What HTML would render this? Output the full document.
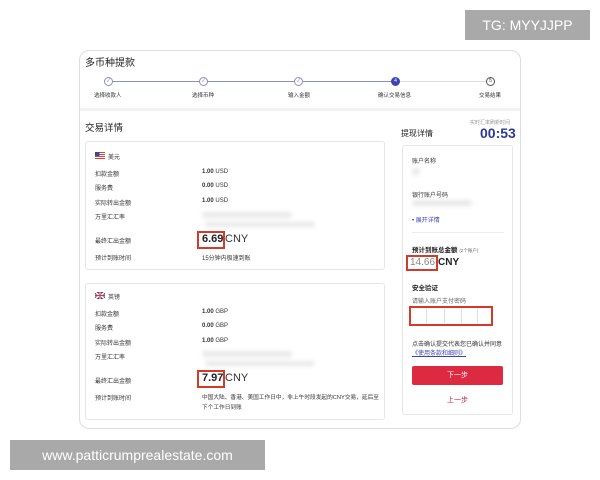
<!DOCTYPE html>
<html><head><meta charset="utf-8"><style>
*{margin:0;padding:0;box-sizing:border-box}
body{width:600px;height:480px;background:#fff;position:relative;overflow:hidden;font-family:"Liberation Sans","Noto Sans CJK SC",sans-serif;color:#222}
.a{position:absolute;white-space:nowrap}
.s{font-size:6px;color:#333}
.card{position:absolute;border:1px solid #e6e6e6;border-radius:3px;background:#fff}
.red{position:absolute;border:2px solid #d23a2a}
.blur{position:absolute;background:#e8e8e8;filter:blur(2px);border-radius:3px}
.c{position:absolute;width:9px;height:9px;border-radius:50%;border:1px solid #8a8fc0;background:#fff;font-size:5px;text-align:center;line-height:7px;color:#6a70b0}
</style></head><body>
<div class="a" style="left:465px;top:10px;width:125px;height:30px;background:#a9a9a9;color:#fff;font-size:14px;line-height:30px;text-align:center">TG: MYYJJPP</div>
<div class="a" style="left:10px;top:440px;width:255px;height:30px;background:#a9a9a9;color:#fff;font-size:14px;line-height:30px;text-align:center">www.patticrumprealestate.com</div>

<div class="a" style="left:79px;top:50px;width:442px;height:379px;border:1px solid #ddd;border-radius:10px;background:#fff"></div>
<div class="a" style="left:80px;top:108px;width:440px;height:3px;background:#f2f2f2"></div>
<div class="a" style="left:85px;top:54px;font-size:10px;color:#222">多币种提款</div>
<div class="a" style="left:108px;top:81px;width:287px;height:1px;background:#8a8fc0"></div>
<div class="a" style="left:395px;top:81px;width:95px;height:1px;background:#ddd"></div>
<div class="c" style="left:104px;top:77px">✓</div>
<div class="c" style="left:199px;top:77px">✓</div>
<div class="c" style="left:294px;top:77px">✓</div>
<div class="c" style="left:391px;top:77px;background:#3b44b0;border-color:#3b44b0;color:#fff">4</div>
<div class="c" style="left:486px;top:77px;border-color:#555;color:#333">5</div>
<div class="a s" style="left:94px;top:91px;font-size:5.5px">选择收款人</div>
<div class="a s" style="left:192px;top:91px;font-size:5.5px">选择币种</div>
<div class="a s" style="left:288px;top:91px;font-size:5.5px">输入金额</div>
<div class="a s" style="left:378px;top:91px;font-size:5.5px">确认交易信息</div>
<div class="a s" style="left:479px;top:91px;font-size:5.5px">交易结果</div>

<div class="a" style="left:85px;top:120px;font-size:9.5px">交易详情</div>
<div class="a" style="left:401px;top:128px;font-size:8px">提现详情</div>
<div class="a" style="left:470px;top:119px;font-size:5px;color:#999">实时汇率刷新时间</div>
<div class="a" style="left:480px;top:125px;font-size:14px;color:#2c3a8f;font-weight:bold">00:53</div>

<div class="card" style="left:85px;top:141px;width:300px;height:129px"></div>
<svg class="a" style="left:95px;top:152px" width="10" height="7"><rect width="10" height="7" fill="#fff"/><rect y="0" width="10" height="1" fill="#c44"/><rect y="2" width="10" height="1" fill="#c44"/><rect y="4" width="10" height="1" fill="#c44"/><rect y="6" width="10" height="1" fill="#c44"/><rect width="4.5" height="4" fill="#3a4a8a"/></svg>
<div class="a s" style="left:108px;top:152px">美元</div>
<div class="a s" style="left:95px;top:169px">扣款金额</div><div class="a s" style="left:202px;top:169px"><b>1.00</b> USD</div>
<div class="a s" style="left:95px;top:183px">服务费</div><div class="a s" style="left:202px;top:183px"><b>0.00</b> USD</div>
<div class="a s" style="left:95px;top:198px">实际转出金额</div><div class="a s" style="left:202px;top:198px"><b>1.00</b> USD</div>
<div class="a s" style="left:95px;top:212px">万里汇汇率</div>
<div class="blur" style="left:202px;top:212px;width:90px;height:6px"></div>
<div class="blur" style="left:205px;top:222px;width:110px;height:5px"></div>
<div class="a s" style="left:95px;top:236px">最终汇出金额</div>
<div class="red" style="left:197px;top:231px;width:28px;height:18px"></div>
<div class="a" style="left:202px;top:233px;font-size:11px;font-weight:bold">6.69</div>
<div class="a" style="left:225px;top:233px;font-size:11px;color:#333">CNY</div>
<div class="a s" style="left:95px;top:253px">预计到账时间</div><div class="a s" style="left:202px;top:253px">15分钟内极速到账</div>

<div class="card" style="left:85px;top:283px;width:300px;height:137px"></div>
<svg class="a" style="left:95px;top:292px" width="10" height="7"><rect width="10" height="7" fill="#2a3f8f"/><path d="M0 0L10 7M10 0L0 7" stroke="#fff" stroke-width="1.5"/><rect x="4" width="2" height="7" fill="#fff"/><rect y="2.5" width="10" height="2" fill="#fff"/><rect x="4.4" width="1.2" height="7" fill="#d33"/><rect y="2.9" width="10" height="1.2" fill="#d33"/></svg>
<div class="a s" style="left:108px;top:292px">英镑</div>
<div class="a s" style="left:95px;top:309px">扣款金额</div><div class="a s" style="left:202px;top:309px"><b>1.00</b> GBP</div>
<div class="a s" style="left:95px;top:323px">服务费</div><div class="a s" style="left:202px;top:323px"><b>0.00</b> GBP</div>
<div class="a s" style="left:95px;top:338px">实际转出金额</div><div class="a s" style="left:202px;top:338px"><b>1.00</b> GBP</div>
<div class="a s" style="left:95px;top:352px">万里汇汇率</div>
<div class="blur" style="left:202px;top:351px;width:90px;height:6px"></div>
<div class="blur" style="left:205px;top:361px;width:110px;height:5px"></div>
<div class="a s" style="left:95px;top:376px">最终汇出金额</div>
<div class="red" style="left:197px;top:370px;width:28px;height:18px"></div>
<div class="a" style="left:202px;top:372px;font-size:11px;font-weight:bold">7.97</div>
<div class="a" style="left:225px;top:372px;font-size:11px;color:#333">CNY</div>
<div class="a s" style="left:95px;top:393px">预计到账时间</div>
<div class="a s" style="left:202px;top:393px;line-height:10px;font-size:5.7px">中国大陆、香港、美国工作日中，非上午时段发起的CNY交易，延后至<br>下个工作日到账</div>

<div class="card" style="left:402px;top:145px;width:111px;height:270px"></div>
<div class="a s" style="left:412px;top:156px">账户名称</div>
<div class="blur" style="left:412px;top:168px;width:8px;height:7px"></div>
<div class="a s" style="left:412px;top:190px">银行账户号码</div>
<div class="blur" style="left:412px;top:200px;width:60px;height:6px"></div>
<div class="a s" style="left:412px;top:215px;color:#3b44b0">• 展开详情</div>
<div class="a" style="left:412px;top:232px;width:92px;height:1px;background:#eee"></div>
<div class="a" style="left:412px;top:244px;font-size:6.5px;font-weight:bold">预计到账总金额 <span style="font-weight:normal;font-size:4.5px;color:#666">(2个账户)</span></div>
<div class="red" style="left:406px;top:255px;width:32px;height:16px"></div>
<div class="a" style="left:410px;top:257px;font-size:10px;color:#888">14.66</div>
<div class="a" style="left:438px;top:257px;font-size:10px;font-weight:bold">CNY</div>
<div class="a" style="left:412px;top:282px;font-size:6.5px;font-weight:bold">安全验证</div>
<div class="a s" style="left:412px;top:296px;color:#666">请输入账户支付密码</div>
<div class="red" style="left:409px;top:306px;width:84px;height:20px"></div>
<div class="a" style="left:426px;top:309px;width:1px;height:14px;background:#ddd"></div>
<div class="a" style="left:444px;top:309px;width:1px;height:14px;background:#ddd"></div>
<div class="a" style="left:461px;top:309px;width:1px;height:14px;background:#ddd"></div>
<div class="a" style="left:477px;top:309px;width:1px;height:14px;background:#ddd"></div>
<div class="a s" style="left:412px;top:339px">点击确认提交代表您已确认并同意</div>
<div class="a s" style="left:412px;top:348px;color:#3b44b0;text-decoration:underline">《使用条款和细则》</div>
<div class="a" style="left:412px;top:366px;width:91px;height:19px;background:#dc2a40;border-radius:2px;color:#fff;font-size:7px;text-align:center;line-height:19px">下一步</div>
<div class="a" style="left:447px;top:395px;font-size:7px;color:#c0203a">上一步</div>
</body></html>
